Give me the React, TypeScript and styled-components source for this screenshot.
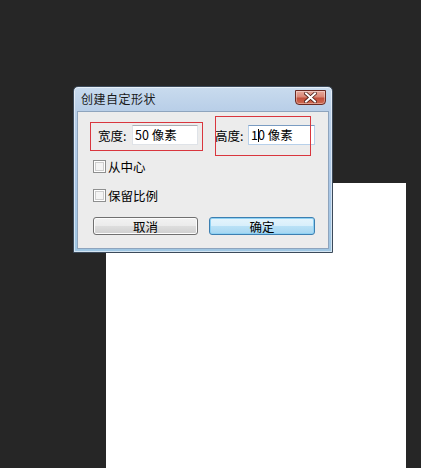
import React from "react";
import styled, { createGlobalStyle } from "styled-components";

const Global = createGlobalStyle`
  html, body { margin: 0; padding: 0; background: #262626; }
  body { width: 421px; height: 468px; overflow: hidden; position: relative;
    font-family: "Noto Sans CJK SC", "Noto Sans", sans-serif; }
`;

const Stage = styled.div`
  position: relative;
  width: 421px;
  height: 468px;
  background: #262626;
  padding: 183px 0 0 106px;
  box-sizing: border-box;
`;

const Canvas = styled.div`
  width: 300px;
  height: 285px;
  background: #ffffff;
`;

const Dialog = styled.div`
  position: absolute;
  left: 73px;
  top: 86px;
  width: 260px;
  height: 167px;
  box-sizing: border-box;
  border: 1px solid #3c4a5a;
  border-radius: 5px 5px 0 0;
  background: linear-gradient(180deg, #c9dbee 0%, #b9cfe8 14%, #a9c6e6 60%, #9fc6e2 100%);
  display: flex;
  flex-direction: column;
  padding: 0 3px 3px 3px;
  box-shadow: inset 0 0 0 1px rgba(255,255,255,0.55);
`;

const TitleBar = styled.div`
  height: 24px;
  display: flex;
  align-items: center;
  justify-content: space-between;
  padding: 0 3px 0 4px;
`;

const Title = styled.span`
  font-size: 12px;
  color: #1a1a1a;
  letter-spacing: 0.5px;
  margin-top: -1px;
`;

const CloseBtn = styled.div`
  width: 31px;
  height: 15px;
  margin-top: -4px;
  box-sizing: border-box;
  border: 1px solid #6b2a22;
  border-radius: 0 0 4px 4px;
  background: linear-gradient(180deg, #e9a99b 0%, #d98776 45%, #c2503c 55%, #cf6b52 100%);
  box-shadow: inset 0 0 0 1px rgba(255,255,255,0.35);
  display: flex;
  align-items: center;
  justify-content: center;
`;

const Body = styled.div`
  position: relative;
  flex: 1;
  background: #ececec;
  border: 1px solid #8ea4bd;
  display: flex;
  flex-direction: column;
  padding: 13px 0 0 14px;
`;

const FieldRow = styled.div`
  display: flex;
  align-items: center;
  height: 20px;
  padding-left: 6px;
`;

const Label = styled.span<{ $w: number }>`
  width: ${(p) => p.$w}px;
  font-size: 12.5px;
  color: #000;
  white-space: nowrap;
`;

const Input = styled.div<{ $w: number; $focus?: boolean }>`
  width: ${(p) => p.$w}px;
  height: 20px;
  box-sizing: border-box;
  background: #fff;
  border: 1px solid ${(p) => (p.$focus ? "#b7d0ea" : "#dfe3e8")};
  border-top-color: ${(p) => (p.$focus ? "#7a9cc2" : "#abadb3")};
  font-size: 12.5px;
  line-height: 18px;
  padding-left: 2px;
  color: #000;
  white-space: nowrap;
  display: flex;
  align-items: center;
`;

const Caret = styled.span`
  display: inline-block;
  width: 1px;
  height: 13px;
  background: #000;
  margin: 0 -1px 0 0;
`;

const Gap = styled.div<{ $w: number }>`
  width: ${(p) => p.$w}px;
  flex: none;
`;

const CheckRow = styled.label<{ $mt: number }>`
  display: flex;
  align-items: center;
  margin-top: ${(p) => p.$mt}px;
  padding-left: 1px;
  font-size: 12.5px;
  color: #000;
  height: 13px;
`;

const Box = styled.span`
  width: 13px;
  height: 13px;
  box-sizing: border-box;
  border: 1px solid #8e8f8f;
  background: #f4f4f4;
  box-shadow: inset 0 0 0 1px #fff, inset 0 0 0 2px #cdcdcd;
  margin-right: 2px;
  flex: none;
`;

const ButtonRow = styled.div`
  display: flex;
  gap: 11px;
  margin-top: 15px;
  padding-left: 1px;
`;

const Button = styled.div<{ $primary?: boolean }>`
  width: ${(p) => (p.$primary ? 106 : 105)}px;
  height: 18px;
  box-sizing: border-box;
  border: 1px solid ${(p) => (p.$primary ? "#3c7fb1" : "#707070")};
  border-radius: 3px;
  background: ${(p) =>
    p.$primary
      ? "linear-gradient(180deg, #e5f4fc 0%, #d8effb 48%, #b9e1f6 52%, #a5d6f1 100%)"
      : "linear-gradient(180deg, #f2f2f2 0%, #ebebeb 48%, #dddddd 52%, #cfcfcf 100%)"};
  box-shadow: inset 0 0 0 1px ${(p) => (p.$primary ? "#8ed1f3" : "#fcfcfc")};
  display: flex;
  align-items: center;
  justify-content: center;
  font-size: 12.5px;
  color: #000;
`;

const Annotation = styled.div<{ $x: number; $y: number; $w: number; $h: number }>`
  position: absolute;
  left: ${(p) => p.$x}px;
  top: ${(p) => p.$y}px;
  width: ${(p) => p.$w}px;
  height: ${(p) => p.$h}px;
  box-sizing: border-box;
  border: 1px solid #d9363e;
  pointer-events: none;
`;

export default function App() {
  return (
    <>
      <Global />
      <Stage>
        <Canvas />
        <Dialog>
          <TitleBar>
            <Title>创建自定形状</Title>
            <CloseBtn>
              <svg width="13" height="11" viewBox="0 0 13 11">
                <path
                  d="M2 1.5 L11 9.5 M11 1.5 L2 9.5"
                  stroke="#4a1d16"
                  strokeWidth="3.6"
                  strokeLinecap="square"
                />
                <path
                  d="M2 1.5 L11 9.5 M11 1.5 L2 9.5"
                  stroke="#ffffff"
                  strokeWidth="2"
                  strokeLinecap="square"
                />
              </svg>
            </CloseBtn>
          </TitleBar>
          <Body>
            <FieldRow>
              <Label $w={34}>宽度:</Label>
              <Input $w={66}>50 像素</Input>
              <Gap $w={17} />
              <Label $w={33}>高度:</Label>
              <Input $w={67} $focus>
                1<Caret />0 像素
              </Input>
            </FieldRow>
            <CheckRow $mt={15}>
              <Box />
              从中心
            </CheckRow>
            <CheckRow $mt={16}>
              <Box />
              保留比例
            </CheckRow>
            <ButtonRow>
              <Button>取消</Button>
              <Button $primary>确定</Button>
            </ButtonRow>
            <Annotation $x={12} $y={10} $w={113} $h={29} />
            <Annotation $x={137} $y={4} $w={96} $h={40} />
          </Body>
        </Dialog>
      </Stage>
    </>
  );
}
